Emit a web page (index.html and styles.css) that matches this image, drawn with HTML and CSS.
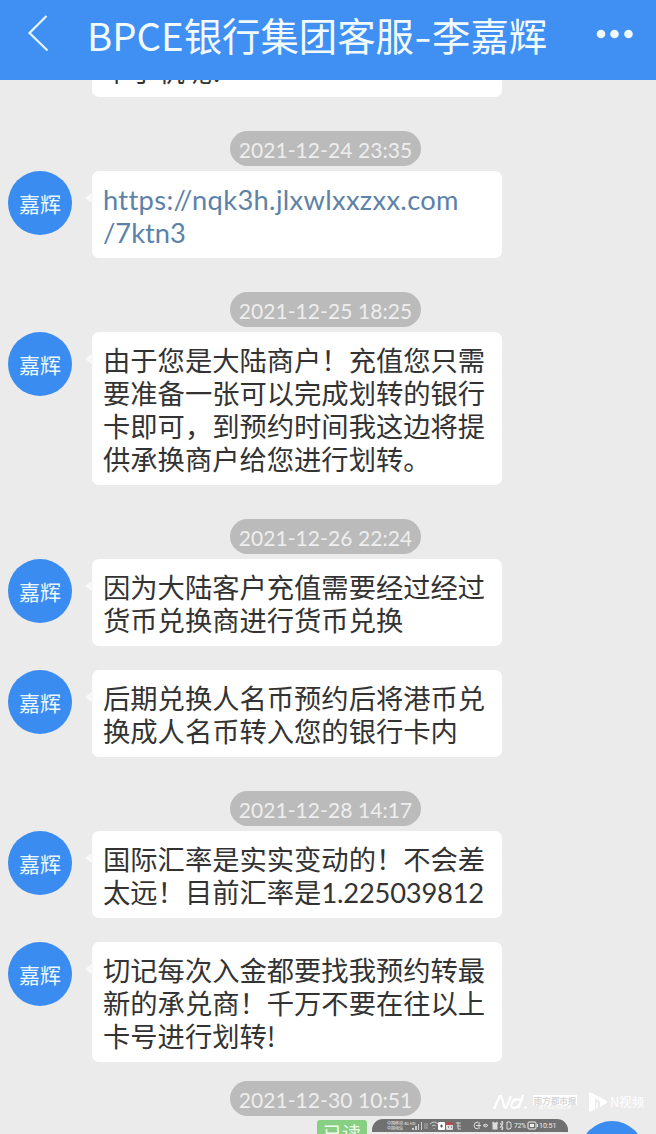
FILE: index.html
```html
<!DOCTYPE html>
<html lang="zh-CN">
<head>
<meta charset="utf-8">
<title>BPCE银行集团客服-李嘉辉</title>
<link rel="stylesheet" href="styles.css">
</head>
<body>
<header class="bar">
  <svg class="back" width="24" height="40" viewBox="0 0 24 40"><path d="M20.500 3 3.500 20 21.500 37.500" fill="none" stroke="#e6f6ff" stroke-width="2.200"/></svg>
  <h1 class="title"><span class="latin">BPCE</span>银行集团客服<span class="dash">-</span>李嘉辉</h1>
  <svg class="more" width="40" height="12" viewBox="0 0 40 12"><g fill="#eefaff"><circle cx="5" cy="6" r="4.300"/><circle cx="18.500" cy="6" r="4.300"/><circle cx="32.500" cy="6" r="4.300"/></g></svg>
</header>
<main class="chat">
  <div class="bubble cut"><p>个手机呢!</p></div>
  <time class="stamp">2021-12-24 23:35</time>
  <section class="row"><div class="avatar">嘉辉</div><div class="bubble tail"><p class="link"><span class="url">https://nqk3h.jlxwlxxzxx.com</span><br>/7ktn3</p></div></section>
  <time class="stamp">2021-12-25 18:25</time>
  <section class="row"><div class="avatar">嘉辉</div><div class="bubble tail"><p>由于您是大陆商户！充值您只需<br>要准备一张可以完成划转的银行<br>卡即可，到预约时间我这边将提<br>供承换商户给您进行划转。</p></div></section>
  <time class="stamp">2021-12-26 22:24</time>
  <section class="row"><div class="avatar">嘉辉</div><div class="bubble tail"><p>因为大陆客户充值需要经过经过<br>货币兑换商进行货币兑换</p></div></section>
  <section class="row next"><div class="avatar">嘉辉</div><div class="bubble tail"><p>后期兑换人名币预约后将港币兑<br>换成人名币转入您的银行卡内</p></div></section>
  <time class="stamp">2021-12-28 14:17</time>
  <section class="row"><div class="avatar">嘉辉</div><div class="bubble tail"><p>国际汇率是实实变动的！不会差<br>太远！目前汇率是<span class="num">1.225039812</span></p></div></section>
  <section class="row next"><div class="avatar">嘉辉</div><div class="bubble tail"><p>切记每次入金都要找我预约转最<br>新的承兑商！千万不要在往以上<br>卡号进行划转!</p></div></section>
  <time class="stamp last">2021-12-30 10:51</time>
</main>
<div class="read">已读</div>
<div class="status">
  <div class="carrier"><span>中国移动 4G HD</span><span>中国电信</span></div>
  <svg class="signals" width="76" height="13" viewBox="0 0 76 13">
    <g fill="#ccc"><path d="M1 9h2v2H1zM4 7h2v4H4zM7 5h1v6H7zM10 3h1v8h-1z"/></g>
    <path d="M14 4v6m2-6v6" fill="none" stroke="#aaa"/>
    <path d="M18 5q4-4 8 0m-6 2q2-2 4 0m-2 2v1" fill="none" stroke="#ccc" transform="translate(1)"/>
    <rect x="27" y="3" width="7" height="8" rx="1" fill="#fff"/><path d="M29 7h3M30.500 5.500v3" stroke="#555"/>
    <rect x="35" y="4" width="7" height="7" rx="1" fill="#ddd"/><path d="M34 5q4.500-5 9 0v1h-9z" fill="#b64b50"/><path d="M37 8h1m2 0h1" stroke="#444"/>
    <path d="M45 4h5m-4 3h4m-3 3h3m-3-7v7" stroke="#ccc" fill="none"/>
    <path d="M67 3q-4 0-4 3.500T67 10M68 3v7M65 6.500h5" fill="none" stroke="#ddd"/>
  </svg>
  <svg class="tools" width="40" height="13" viewBox="0 0 40 13" fill="none" stroke="#ddd">
    <path d="M1 6.500q2.500-3 5 0-2.500 3-5 0zm2-1v2"/><rect x="11" y="4" width="4" height="6" fill="#ddd"/><path d="m10 4 2-1m2 0 2 1M18 4l3 5-1 2V2l1 2-3 5M28 3h-3v7h3l1-1V4z"/>
  </svg>
  <span class="pct">72%</span>
  <svg class="battery" width="12" height="9" viewBox="0 0 12 9"><rect x="1" y="1" width="8" height="7" rx="1" fill="none" stroke="#eee"/><path d="M3 3h4v3H3zM10 3h1v3h-1z" fill="#eee"/></svg>
  <span class="clock">10:51</span>
</div>
<div class="me"></div>
<div class="brand">
  <svg width="37" height="18" viewBox="0 0 37 18" fill="none" stroke="#fff" stroke-width="2.200"><path d="M1 16 6.500 3.500q1-1.500 2 .5l3 10q1 2 2 0L18 3M27 7q-6-2-8 3-2 6 3 5 4-1 6-7l2-6m-3 8-1 5"/><circle cx="32.500" cy="14.500" r="1" fill="#fff" stroke-width="1"/></svg>
  <div class="paper"><span>南方都市报</span><small>南方报业传媒集团</small></div>
  <svg class="play" width="20" height="22" viewBox="0 0 20 22"><path d="M1 2.500Q1 .5 3 1.500L18 9.500q2 1.500 0 3L12 16V10.500L7 7.500V18.500L3 20.500Q1 21 1 19z" fill="#fff"/><path d="M9 11.500v6" stroke="#fff" stroke-width="1.500"/></svg>
  <span class="video">N视频</span>
</div>
</body>
</html>
```
FILE: styles.css
```css
* { box-sizing: border-box; }
body { margin: 0; width: 656px; height: 1134px; position: relative; overflow: hidden; background: #ebebeb; color: #333; font-family: "Noto Sans CJK SC", sans-serif; }
.bar { height: 80px; background: #408ff2; color: #f0faff; display: flex; align-items: center; padding: 0 20px 12px 26px; }
.back { margin-top: -3px; }
.title { margin: 0 0 0 37px; font-size: 38.400px; line-height: 56px; font-weight: 400; white-space: nowrap; }
.title .dash { display: inline-block; width: 18px; text-align: center; transform: scaleX(1.300); }
.more { margin-left: auto; }
.chat { height: 1054px; overflow: hidden; display: flex; flex-direction: column; }
.chat > * { flex-shrink: 0; }
.bubble { width: 410px; background: #fff; border-radius: 7px; padding: 11px 0 10px 11px; }
.bubble p { margin: 0; font-size: 27.300px; line-height: 33px; white-space: nowrap; }
.cut { margin-left: 92px; height: 17px; padding: 0 0 0 11px; overflow: hidden; border-radius: 0 0 7px 7px; display: flex; align-items: flex-end; }
.cut p { padding-bottom: 10px; }
.stamp { align-self: flex-start; margin: 34px 0 5px 230px; width: 191px; height: 35px; border-radius: 18px; background: #bbb; color: #eee; font: 21px/37px Lato, sans-serif; letter-spacing: .08px; text-align: center; white-space: nowrap; }
.last { margin-top: 19px; }
.row { display: flex; align-items: flex-start; gap: 20px; padding-left: 8px; }
.next { margin-top: 24px; }
.avatar { width: 64px; height: 64px; border-radius: 50%; background: #3b8cf0; color: #eaf8ff; font-size: 21px; line-height: 65px; text-align: center; }
.tail { position: relative; }
.tail::before { content: ""; position: absolute; left: -7px; top: 21px; border: solid transparent; border-width: 6px 8px 6px 0; border-right-color: #f8f8f8; }
.bubble .link { padding-top: 1px; margin-bottom: -1px; color: #5d82a8; font-family: Lato, sans-serif; }
.url { letter-spacing: .33px; }
.num { font-family: Lato, sans-serif; line-height: 0; letter-spacing: -.2px; }
.read { position: absolute; left: 317px; top: 1120px; width: 50px; height: 24px; border-radius: 3px; background: #87cf82; color: #f1fff0; font-size: 19px; line-height: 25px; text-align: center; }
.status { position: absolute; left: 372px; top: 1119px; width: 196px; height: 13px; background: #707070; border-radius: 11px 11px 0 0; color: #eee; display: flex; align-items: center; padding-left: 15px; font: 7px/12px Roboto, sans-serif; white-space: nowrap; }
.status > * { flex-shrink: 0; }
.carrier { width: 24px; font: 4px/5px "Noto Sans CJK SC", sans-serif; display: flex; flex-direction: column; }
.signals { margin-right: -3px; }
.tools { margin-left: -2px; margin-right: -8px; }
.pct { width: 12px; font-size: 6.500px; }
.battery { margin-left: 1px; }
.clock { margin-left: 0; }
.me { position: absolute; left: 580px; top: 1121px; width: 64px; height: 64px; border-radius: 50%; background: #3b8cf0; }
.brand { position: absolute; left: 493px; top: 1091px; height: 22px; display: flex; align-items: center; color: #fff; white-space: nowrap; }
.paper { width: 44px; margin-left: 3px; display: flex; flex-direction: column; text-align: center; }
.paper span { background: #fff; color: #d6d6d6; font-size: 8.500px; line-height: 10px; font-weight: 700; }
.paper small { font-size: 4px; line-height: 5px; }
.play { margin-left: 11px; }
.video { font-size: 12.500px; line-height: 22px; margin-left: 2px; }
```
